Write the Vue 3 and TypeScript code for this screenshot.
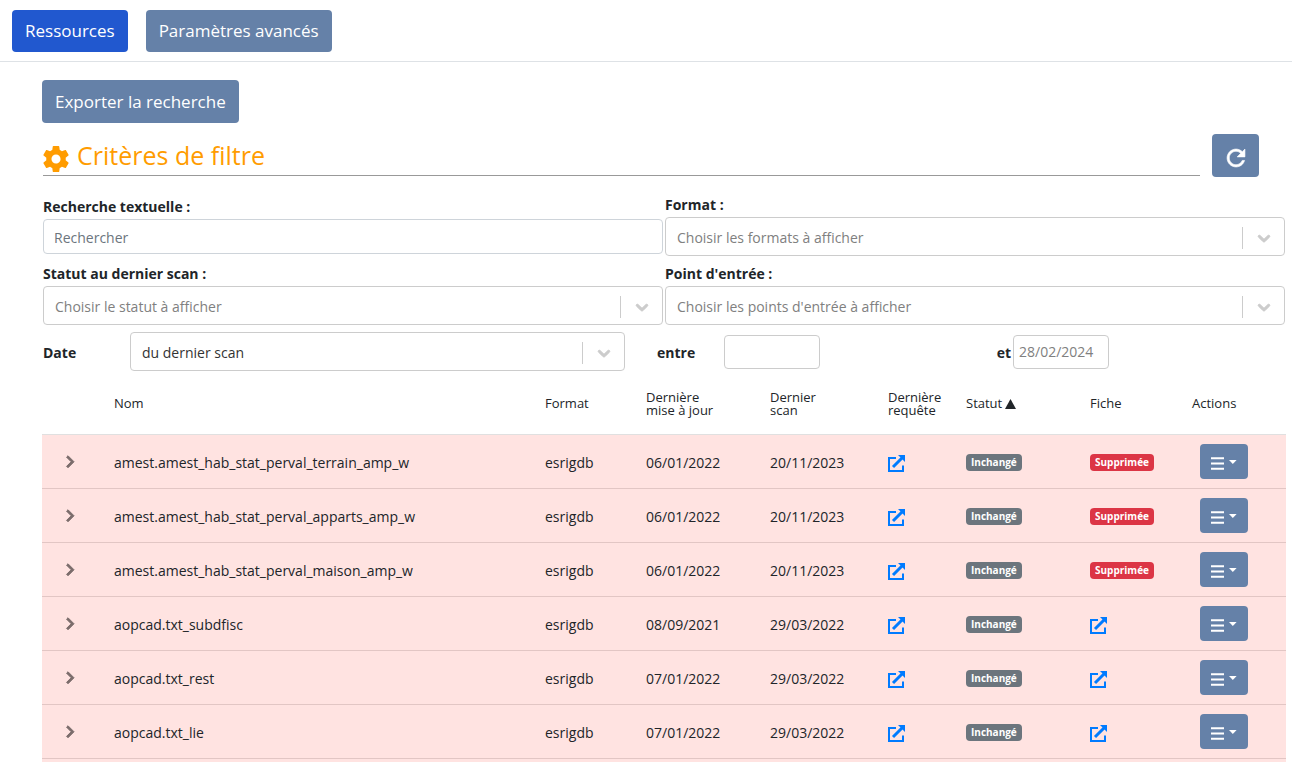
<script setup lang="ts">
import { ref } from 'vue'

interface Resource {
  name: string
  format: string
  updated: string
  scanned: string
  deleted: boolean
}

const rows: Resource[] = [
  { name: 'amest.amest_hab_stat_perval_terrain_amp_w', format: 'esrigdb', updated: '06/01/2022', scanned: '20/11/2023', deleted: true },
  { name: 'amest.amest_hab_stat_perval_apparts_amp_w', format: 'esrigdb', updated: '06/01/2022', scanned: '20/11/2023', deleted: true },
  { name: 'amest.amest_hab_stat_perval_maison_amp_w', format: 'esrigdb', updated: '06/01/2022', scanned: '20/11/2023', deleted: true },
  { name: 'aopcad.txt_subdfisc', format: 'esrigdb', updated: '08/09/2021', scanned: '29/03/2022', deleted: false },
  { name: 'aopcad.txt_rest', format: 'esrigdb', updated: '07/01/2022', scanned: '29/03/2022', deleted: false },
  { name: 'aopcad.txt_lie', format: 'esrigdb', updated: '07/01/2022', scanned: '29/03/2022', deleted: false },
]

const search = ref('')
const format = ref('')
const status = ref('')
const entry = ref('')
const dateKind = ref('scan')
const from = ref('')
const to = ref('')
</script>

<template>
  <div class="page">
    <nav class="tabs">
      <button type="button" class="btn active">Ressources</button>
      <button type="button" class="btn">Paramètres avancés</button>
    </nav>

    <main class="content">
      <button type="button" class="btn">Exporter la recherche</button>

      <header class="heading">
        <h1 class="title">
          <svg class="gear" viewBox="2 2 20 20" aria-hidden="true">
            <path d="M19.43 12.98c.04-.32.07-.64.07-.98s-.03-.66-.07-.98l2.11-1.65c.19-.15.24-.42.12-.64l-2-3.46c-.12-.22-.39-.3-.61-.22l-2.49 1c-.52-.4-1.08-.73-1.69-.98l-.38-2.65C14.46 2.18 14.25 2 14 2h-4c-.25 0-.46.18-.49.42l-.38 2.65c-.61.25-1.17.59-1.69.98l-2.49-1c-.23-.09-.49 0-.61.22l-2 3.46c-.13.22-.07.49.12.64l2.11 1.65c-.04.32-.07.65-.07.98s.03.66.07.98l-2.11 1.65c-.19.15-.24.42-.12.64l2 3.46c.12.22.39.3.61.22l2.49-1c.52.4 1.08.73 1.69.98l.38 2.65c.03.24.24.42.49.42h4c.25 0 .46-.18.49-.42l.38-2.65c.61-.25 1.17-.59 1.69-.98l2.49 1c.23.09.49 0 .61-.22l2-3.46c.12-.22.07-.49-.12-.64l-2.11-1.65zM12 15.5c-1.93 0-3.5-1.57-3.5-3.5s1.57-3.5 3.5-3.5 3.5 1.57 3.5 3.5-1.57 3.5-3.5 3.5z" />
          </svg>
          Critères de filtre
        </h1>
        <button type="button" class="btn refresh" aria-label="Actualiser">
          <svg viewBox="0 0 512 512" aria-hidden="true">
            <path d="M256 388c-72.597 0-132-59.405-132-132 0-72.601 59.403-132 132-132 36.3 0 69.299 15.4 92.406 39.601L278 234h154V80l-51.698 51.702C348.406 99.798 304.406 80 256 80c-96.797 0-176 79.203-176 176s78.094 176 176 176c81.045 0 148.287-54.134 169.401-128H378.85c-18.745 49.561-67.138 84-122.85 84z" />
          </svg>
        </button>
      </header>

      <form class="filters" @submit.prevent>
        <div class="field">
          <label for="search">Recherche textuelle :</label>
          <input id="search" v-model="search" class="text" type="text" placeholder="Rechercher" />
        </div>
        <div class="field">
          <label for="format">Format :</label>
          <div class="select">
            <select id="format" v-model="format" class="empty">
              <option value="">Choisir les formats à afficher</option>
            </select>
            <span class="indicator"><svg viewBox="0 0 20 20" aria-hidden="true"><path d="M4.516 7.548c.436-.446 1.043-.481 1.576 0L10 11.295l3.908-3.747c.533-.481 1.141-.446 1.574 0 .436.445.408 1.197 0 1.615-.406.418-4.695 4.502-4.695 4.502a1.095 1.095 0 0 1-1.576 0S4.924 9.581 4.516 9.163s-.436-1.17 0-1.615z" /></svg></span>
          </div>
        </div>
        <div class="field">
          <label for="status">Statut au dernier scan :</label>
          <div class="select">
            <select id="status" v-model="status" class="empty">
              <option value="">Choisir le statut à afficher</option>
            </select>
            <span class="indicator"><svg viewBox="0 0 20 20" aria-hidden="true"><path d="M4.516 7.548c.436-.446 1.043-.481 1.576 0L10 11.295l3.908-3.747c.533-.481 1.141-.446 1.574 0 .436.445.408 1.197 0 1.615-.406.418-4.695 4.502-4.695 4.502a1.095 1.095 0 0 1-1.576 0S4.924 9.581 4.516 9.163s-.436-1.17 0-1.615z" /></svg></span>
          </div>
        </div>
        <div class="field">
          <label for="entry">Point d'entrée :</label>
          <div class="select">
            <select id="entry" v-model="entry" class="empty">
              <option value="">Choisir les points d'entrée à afficher</option>
            </select>
            <span class="indicator"><svg viewBox="0 0 20 20" aria-hidden="true"><path d="M4.516 7.548c.436-.446 1.043-.481 1.576 0L10 11.295l3.908-3.747c.533-.481 1.141-.446 1.574 0 .436.445.408 1.197 0 1.615-.406.418-4.695 4.502-4.695 4.502a1.095 1.095 0 0 1-1.576 0S4.924 9.581 4.516 9.163s-.436-1.17 0-1.615z" /></svg></span>
          </div>
        </div>

        <div class="dates">
          <label for="kind">Date</label>
          <div class="select">
            <select id="kind" v-model="dateKind">
              <option value="scan">du dernier scan</option>
            </select>
            <span class="indicator"><svg viewBox="0 0 20 20" aria-hidden="true"><path d="M4.516 7.548c.436-.446 1.043-.481 1.576 0L10 11.295l3.908-3.747c.533-.481 1.141-.446 1.574 0 .436.445.408 1.197 0 1.615-.406.418-4.695 4.502-4.695 4.502a1.095 1.095 0 0 1-1.576 0S4.924 9.581 4.516 9.163s-.436-1.17 0-1.615z" /></svg></span>
          </div>
          <label for="from" class="from">entre</label>
          <input id="from" v-model="from" class="date" type="text" />
          <label for="to" class="to">et</label>
          <input id="to" v-model="to" class="date" type="text" placeholder="28/02/2024" />
        </div>
      </form>

      <table class="grid">
        <colgroup>
          <col class="c-expand" /><col /><col class="c-format" /><col class="c-date" /><col class="c-scan" />
          <col class="c-query" /><col class="c-status" /><col class="c-sheet" /><col class="c-actions" />
        </colgroup>
        <thead>
          <tr>
            <th></th>
            <th>Nom</th>
            <th>Format</th>
            <th>Dernière<br />mise à jour</th>
            <th>Dernier<br />scan</th>
            <th>Dernière<br />requête</th>
            <th><span class="sorted">Statut<svg viewBox="0 0 11 10" aria-hidden="true"><path d="M5.5 0L11 10H0z" /></svg></span></th>
            <th>Fiche</th>
            <th>Actions</th>
          </tr>
        </thead>
        <tbody>
          <tr v-for="row in rows" :key="row.name">
            <td>
              <button type="button" class="plain" :aria-label="'Détails ' + row.name">
                <svg viewBox="0 0 24 24" aria-hidden="true"><path d="M8.59 16.34l4.58-4.59-4.58-4.59L10 5.75l6 6-6 6z" /></svg>
              </button>
            </td>
            <td class="value">{{ row.name }}</td>
            <td class="value">{{ row.format }}</td>
            <td class="value">{{ row.updated }}</td>
            <td class="value">{{ row.scanned }}</td>
            <td>
              <a href="#" class="open" aria-label="Dernière requête">
                <svg viewBox="0 0 17 17" aria-hidden="true"><path d="M8 3H1V16h14V10.500" class="box" /><path d="M5 12L14 3" class="arm" /><path d="M10 0H17V7z" /></svg>
              </a>
            </td>
            <td><span class="badge">Inchangé</span></td>
            <td>
              <span v-if="row.deleted" class="badge danger">Supprimée</span>
              <a v-else href="#" class="open" aria-label="Fiche">
                <svg viewBox="0 0 17 17" aria-hidden="true"><path d="M8 3H1V16h14V10.500" class="box" /><path d="M5 12L14 3" class="arm" /><path d="M10 0H17V7z" /></svg>
              </a>
            </td>
            <td>
              <button type="button" class="menu" :aria-label="'Actions ' + row.name">
                <svg class="bars" viewBox="0 0 14 13" aria-hidden="true"><path d="M0 0h14v2H0zM0 5.500h14v2H0zM0 11h14v2H0z" /></svg>
                <svg class="caret" viewBox="0 0 8 4" aria-hidden="true"><path d="M0 0h8L4 4z" /></svg>
              </button>
            </td>
          </tr>
          <tr><td colspan="9"></td></tr>
        </tbody>
      </table>
    </main>
  </div>
</template>

<style>
body {
  margin: 0;
  background: #fff;
}
</style>

<style scoped>
.page {
  height: 100vh;
  overflow: hidden;
  color: #212529;
  font-family: 'Open Sans', 'Noto Sans', sans-serif;
  font-size: 14px;
}

button,
input,
select {
  box-sizing: border-box;
  font-family: inherit;
}

svg {
  display: block;
  fill: currentColor;
}

.tabs {
  display: flex;
  gap: 18px;
  margin-right: 13px;
  padding: 10px 12px 9px;
  border-bottom: 1px solid #dee2e6;
}

.btn {
  height: 42px;
  padding: 0 13px;
  border: 0;
  border-radius: 4px;
  background: #6581a8;
  color: #fff;
  font-size: 17px;
  line-height: 24px;
}

.btn.active {
  background: #2158cf;
}

.content {
  padding: 18px 19px 0 42px;
}

.content .btn {
  height: 43px;
}

.heading {
  display: flex;
  align-items: flex-start;
  gap: 12px;
  margin: 11px 27px 0 1px;
}

.title {
  display: flex;
  flex: 1;
  align-items: center;
  gap: 8px;
  height: 41px;
  margin: 0;
  border-bottom: 1px solid #999;
  color: #ff9c00;
  font-size: 25px;
  font-weight: 400;
  line-height: 40px;
}

.gear {
  width: 26px;
  height: 26px;
  margin-top: 9px;
}

.content .refresh {
  display: grid;
  width: 47px;
  padding: 5px 0 0;
  place-items: center;
}

.refresh svg {
  width: 26px;
  height: 26px;
  stroke: currentColor;
  stroke-width: 12;
}

.filters {
  display: grid;
  grid-template-columns: 1fr 1fr;
  align-items: center;
  gap: 6px 2px;
  margin: 16px 1px 0;
}

label {
  font-weight: 700;
}

.field label {
  display: block;
  height: 24px;
  line-height: 24px;
}

.text {
  display: block;
  width: 100%;
  height: 35px;
  padding: 2px 10px 0;
  border: 1px solid #ced4da;
  border-radius: 4px;
  color: #212529;
  font-size: 14px;
}

.text::placeholder {
  color: #6c757d;
  opacity: 1;
}

.select {
  position: relative;
}

.select select {
  display: block;
  width: 100%;
  height: 39px;
  padding: 2px 50px 0 11px;
  border: 1px solid #ccc;
  border-radius: 4px;
  background: #fff;
  color: #333;
  font-size: 14px;
  appearance: none;
}

.select select.empty {
  color: #808080;
}

.indicator {
  position: absolute;
  top: 10px;
  right: 1px;
  bottom: 7px;
  display: grid;
  width: 41px;
  border-left: 1px solid #ccc;
  color: #ccc;
  place-items: center;
  pointer-events: none;
}

.indicator svg {
  width: 20px;
  height: 20px;
  stroke: currentColor;
  stroke-width: 1;
}

.dates {
  display: flex;
  grid-column: 1 / -1;
  align-items: center;
  padding-top: 1px;
}

.dates label {
  width: 87px;
  padding-top: 2px;
}

.dates .select {
  flex: 0 1 495px;
}

.dates .from {
  width: 67px;
  margin-left: 32px;
}

.dates .to {
  width: 191px;
  margin-right: 2px;
  text-align: right;
}

.date {
  width: 96px;
  height: 34px;
  padding: 0 5px;
  border: 1px solid #ccc;
  border-radius: 4px;
  color: #333;
  font-size: 14px;
}

.date::placeholder {
  color: #808080;
  opacity: 1;
}

.grid {
  width: 100%;
  border-collapse: separate;
  border-spacing: 0;
  table-layout: fixed;
}

.c-expand {
  width: 56px;
}

.c-format {
  width: 101px;
}

.c-date,
.c-status {
  width: 124px;
}

.c-scan {
  width: 118px;
}

.c-query {
  width: 78px;
}

.c-sheet {
  width: 102px;
}

.c-actions {
  width: 110px;
}

th {
  box-sizing: border-box;
  height: 64px;
  padding: 2px 0 0 16px;
  border-bottom: 1px solid #e0e0e0;
  font-size: 13px;
  font-weight: 500;
  line-height: 13px;
  text-align: left;
}

td {
  box-sizing: border-box;
  height: 54px;
  padding: 0 0 0 16px;
  border-bottom: 1px solid #e2c6c4;
  background: #ffe3e1;
  line-height: 20px;
}

td.value {
  padding-top: 2px;
}

.sorted {
  display: flex;
  align-items: center;
  gap: 3px;
}

.sorted svg {
  width: 11px;
  height: 10px;
}

.plain {
  display: block;
  padding: 0;
  border: 0;
  background: none;
  color: #7b6c6b;
}

.plain svg {
  width: 24px;
  height: 24px;
  stroke: currentColor;
  stroke-width: 1;
}

.open {
  display: block;
  width: 17px;
  margin-top: 3px;
  color: #007bff;
}

.open svg {
  width: 17px;
  height: 17px;
}

.box,
.arm {
  fill: none;
  stroke: currentColor;
  stroke-width: 2;
}

.arm {
  stroke-width: 3;
}

.badge {
  display: inline-block;
  padding: 0 5px;
  border-radius: 4px;
  background: #6c757d;
  color: #fff;
  font-size: 10px;
  font-weight: 700;
  line-height: 17px;
  vertical-align: middle;
}

.badge.danger {
  background: #dc3545;
}

.menu {
  display: flex;
  align-items: center;
  gap: 5px;
  width: 48px;
  height: 35px;
  margin-left: 8px;
  padding: 0 11px;
  border: 0;
  border-radius: 4px;
  background: #6581a8;
  color: #fff;
}

.bars {
  width: 14px;
  height: 13px;
  margin-top: 4px;
}

.caret {
  width: 8px;
  height: 4px;
}
</style>
